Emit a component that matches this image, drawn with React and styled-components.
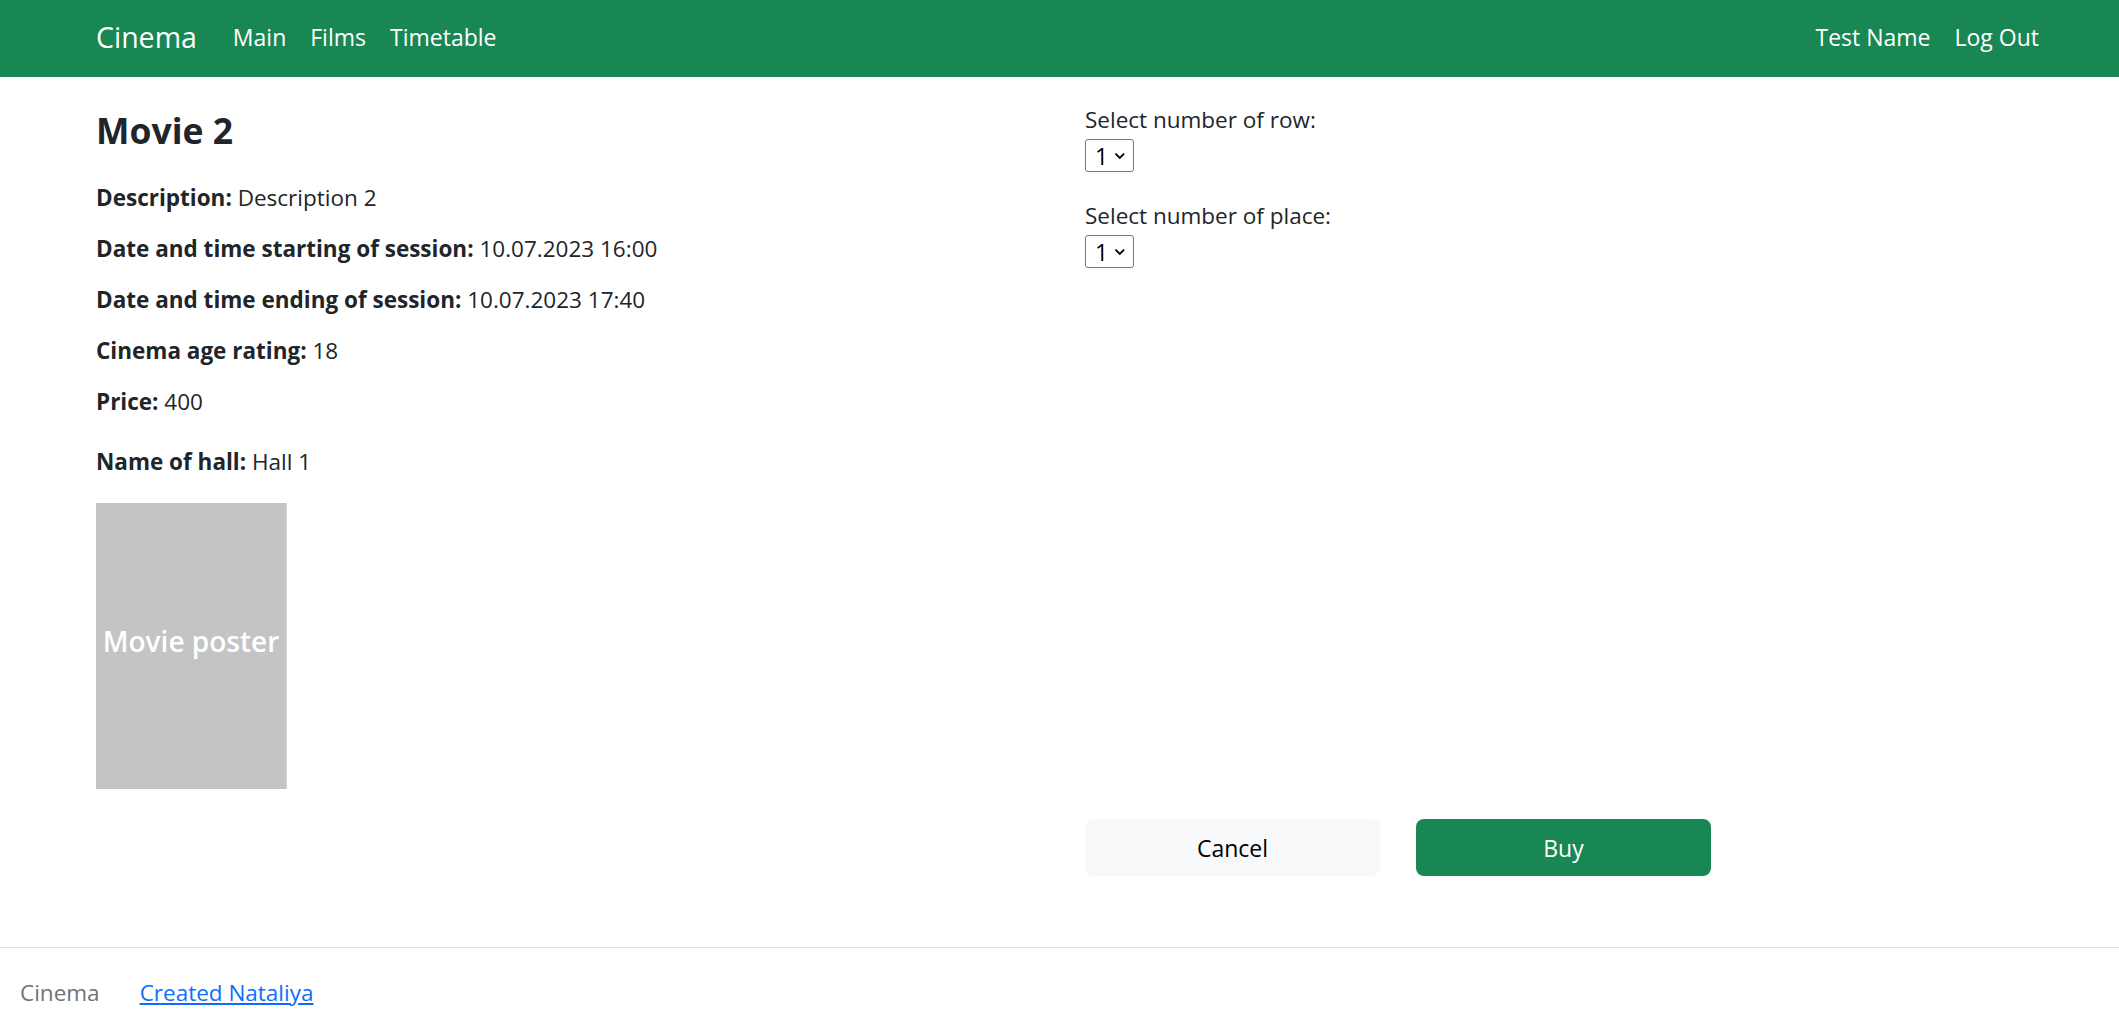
import React from "react";
import styled, { createGlobalStyle } from "styled-components";

const GlobalStyle = createGlobalStyle`
  *, *::before, *::after { box-sizing: border-box; }
  html, body { margin: 0; padding: 0; }
  body {
    font-family: "Open Sans", "Noto Sans", Arial, sans-serif;
    font-size: 22.5px;
    line-height: 1.5;
    color: #212529;
    background: #fff;
  }
`;

const Page = styled.div`
  min-height: 100vh;
  display: flex;
  flex-direction: column;
`;

const Navbar = styled.nav`
  height: 77px;
  background: #198754;
  display: flex;
  align-items: center;
  padding: 0 80px 3px 96px;
`;

const Brand = styled.a`
  color: #fff;
  font-size: 28.5px;
  text-decoration: none;
  margin-right: 36px;
`;

const NavLinks = styled.div`
  display: flex;
  align-items: center;
  gap: 24px;
  flex: ${({ grow }) => (grow ? 1 : "none")};
`;

const NavLink = styled.a`
  color: #fff;
  font-size: 23px;
  text-decoration: none;
`;

const Main = styled.main`
  flex: 1;
  padding: 28px 80px 40px 96px;
  display: grid;
  grid-template-columns: 955px 1fr;
  align-content: start;
  column-gap: 34px;
  row-gap: 30px;
  align-items: start;
`;

const InfoColumn = styled.section`
  display: flex;
  flex-direction: column;
`;

const Title = styled.h2`
  margin: 4px 0 31px;
  font-size: 35.5px;
  line-height: 43px;
  font-weight: 700;
`;

const InfoRow = styled.p`
  margin: ${({ extra }) => (extra ? "9px" : "0")} 0 21px;
  line-height: 30px;

  b {
    font-weight: 700;
  }
`;

const Poster = styled.div`
  margin-top: 5px;
  width: 191px;
  height: 286px;
  padding-bottom: 10px;
  background: #c4c4c4;
  border-right: 1px solid #d6d6d6;
  display: flex;
  align-items: center;
  justify-content: center;
  color: #fff;
  font-size: 28px;
  font-weight: 600;
  white-space: nowrap;
`;

const FormColumn = styled.section`
  display: flex;
  flex-direction: column;
  gap: 29px;
`;

const Field = styled.label`
  display: flex;
  flex-direction: column;
  align-items: flex-start;
  gap: 4px;
  line-height: 30px;
`;

const SelectBox = styled.span`
  display: inline-flex;
  align-items: center;
  gap: 5px;
  width: 49px;
  height: 33px;
  padding: 0 7px 0 9px;
  border: 1px solid #767676;
  border-radius: 3px;
  background: #fff;
`;

const Select = styled.select`
  appearance: none;
  border: none;
  outline: none;
  background: transparent;
  padding: 0;
  margin: 0;
  font-family: inherit;
  font-size: 23px;
  color: #000;
  width: 15px;
`;

const Actions = styled.div`
  grid-column: 2;
  display: flex;
  gap: 36px;
`;

const Button = styled.button`
  width: 295px;
  height: 57px;
  border: none;
  border-radius: 8px;
  font-family: inherit;
  font-size: 23px;
  cursor: pointer;
  background: ${({ primary }) => (primary ? "#198754" : "#f8f9fa")};
  color: ${({ primary }) => (primary ? "#fff" : "#000")};
`;

const Footer = styled.footer`
  height: 86px;
  border-top: 1px solid #dee2e6;
  display: flex;
  align-items: center;
  gap: 40px;
  padding: 4px 20px 0;
  font-size: 22.5px;
`;

const FooterText = styled.span`
  color: #6c757d;
`;

const FooterLink = styled.a`
  color: #0d6efd;
  text-decoration: underline;
`;

const Chevron = () => (
  <svg width="12" height="8" viewBox="0 0 12 8" fill="none">
    <path d="M1.5 1.5L6 6l4.5-4.5" stroke="#000" strokeWidth="1.9" />
  </svg>
);

const SeatSelect = ({ label }) => (
  <Field>
    {label}
    <SelectBox>
      <Select defaultValue="1">
        <option value="1">1</option>
        <option value="2">2</option>
        <option value="3">3</option>
      </Select>
      <Chevron />
    </SelectBox>
  </Field>
);

const info = [
  ["Description:", "Description 2"],
  ["Date and time starting of session:", "10.07.2023 16:00"],
  ["Date and time ending of session:", "10.07.2023 17:40"],
  ["Cinema age rating:", "18"],
  ["Price:", "400"],
];

const App = () => {
  return (
    <Page>
      <GlobalStyle />
      <Navbar>
        <Brand href="#">Cinema</Brand>
        <NavLinks grow>
          <NavLink href="#">Main</NavLink>
          <NavLink href="#">Films</NavLink>
          <NavLink href="#">Timetable</NavLink>
        </NavLinks>
        <NavLinks>
          <NavLink href="#">Test Name</NavLink>
          <NavLink href="#">Log Out</NavLink>
        </NavLinks>
      </Navbar>

      <Main>
        <InfoColumn>
          <Title>Movie 2</Title>
          {info.map(([k, v]) => (
            <InfoRow key={k}>
              <b>{k}</b> {v}
            </InfoRow>
          ))}
          <InfoRow extra>
            <b>Name of hall:</b> Hall 1
          </InfoRow>
          <Poster>Movie poster</Poster>
        </InfoColumn>

        <FormColumn>
          <SeatSelect label="Select number of row:" />
          <SeatSelect label="Select number of place:" />
        </FormColumn>

        <Actions>
          <Button>Cancel</Button>
          <Button primary>Buy</Button>
        </Actions>
      </Main>

      <Footer>
        <FooterText>Cinema</FooterText>
        <FooterLink href="#">Created Nataliya</FooterLink>
      </Footer>
    </Page>
  );
};

export default App;
